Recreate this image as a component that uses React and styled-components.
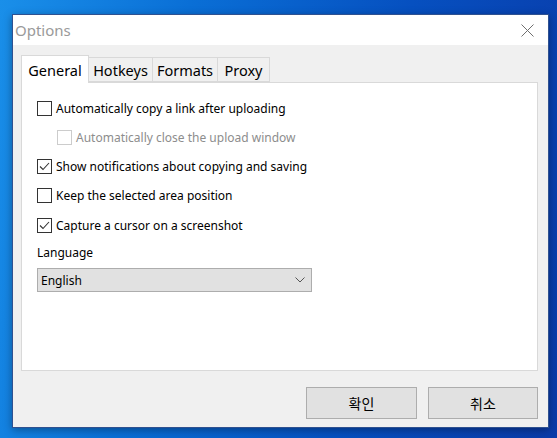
import React, { useState } from "react";
import styled, { createGlobalStyle } from "styled-components";

const GlobalStyle = createGlobalStyle`
  html, body {
    margin: 0;
    padding: 0;
    height: 438px;
    overflow: hidden;
  }
  body {
    background: linear-gradient(100deg, #1a8fe9 0%, #0a6fd6 30%, #0650c0 65%, #0a3aa8 100%);
    font-family: "Noto Sans", "Liberation Sans", sans-serif;
  }
`;

const Desktop = styled.div`
  padding: 14px 0 0 12px;
`;

const Window = styled.div`
  width: 537px;
  height: 414px;
  box-sizing: border-box;
  border: 1px solid #2f5190;
  background: #f0f0f0;
  display: flex;
  flex-direction: column;
  box-shadow: 0 2px 8px rgba(0, 0, 0, 0.35);
`;

const TitleBar = styled.div`
  height: 31px;
  background: #fff;
  display: flex;
  align-items: center;
  justify-content: space-between;
  padding: 0 14px 0 2px;
`;

const Title = styled.span`
  font-size: 15px;
  color: #9a9a9a;
`;

const CloseIcon = () => (
  <svg width="13" height="13" viewBox="0 0 13 13">
    <path d="M0.5 0.5 L12.5 12.5 M12.5 0.5 L0.5 12.5" stroke="#6f6f6f" strokeWidth="1" fill="none" />
  </svg>
);

const Body = styled.div`
  flex: 1;
  display: flex;
  flex-direction: column;
  padding: 10px 10px 8px 8px;
`;

const TabStrip = styled.div`
  display: flex;
  align-items: flex-end;
  height: 27px;
  position: relative;
  z-index: 1;
`;

const Tab = styled.div`
  box-sizing: border-box;
  height: ${(p) => (p.$active ? "28px" : "25px")};
  margin-bottom: ${(p) => (p.$active ? "-1px" : "0")};
  background: ${(p) => (p.$active ? "#fff" : "#f0f0f0")};
  border: 1px solid #d9d9d9;
  border-bottom: ${(p) => (p.$active ? "none" : "1px solid #d9d9d9")};
  margin-left: ${(p) => (p.$first ? "0" : "-1px")};
  font-size: 14.5px;
  color: #000;
  display: flex;
  align-items: center;
  justify-content: center;
  width: ${(p) => p.$w}px;
  cursor: default;
`;

const Panel = styled.div`
  height: 289px;
  box-sizing: border-box;
  background: #fff;
  border: 1px solid #d9d9d9;
  padding: 15px 15px 0 15px;
  display: flex;
  flex-direction: column;
`;

const Options = styled.div`
  display: flex;
  flex-direction: column;
  gap: 9.25px;
`;

const Row = styled.label`
  height: 20px;
  display: flex;
  align-items: center;
  gap: 4px;
  padding-left: ${(p) => (p.$indent ? "20px" : "0")};
  font-size: 12px;
  color: ${(p) => (p.$disabled ? "#8d8d8d" : "#000")};
  cursor: default;
`;

const Box = styled.span`
  width: 15px;
  height: 15px;
  box-sizing: border-box;
  border: 1px solid ${(p) => (p.$disabled ? "#cccccc" : "#333333")};
  background: #fff;
  display: flex;
  align-items: center;
  justify-content: center;
  flex-shrink: 0;
`;

const Check = () => (
  <svg width="11" height="9" viewBox="0 0 11 9">
    <path d="M1 4.5 L4 7.5 L10 1" stroke="#333" strokeWidth="1.1" fill="none" />
  </svg>
);

const Checkbox = ({ label, checked, disabled, indent, onToggle }) => (
  <Row $disabled={disabled} $indent={indent} onClick={disabled ? undefined : onToggle}>
    <Box $disabled={disabled}>{checked && <Check />}</Box>
    {label}
  </Row>
);

const FieldLabel = styled.div`
  font-size: 12px;
  color: #000;
  margin-top: 8px;
  height: 18px;
  display: flex;
  align-items: center;
`;

const Select = styled.div`
  margin-top: 7px;
  width: 275px;
  height: 24px;
  box-sizing: border-box;
  background: #e1e1e1;
  border: 1px solid #adadad;
  display: flex;
  align-items: center;
  justify-content: space-between;
  padding: 0 6px 0 3px;
  font-size: 12px;
  color: #000;
`;

const Chevron = () => (
  <svg width="10" height="6" viewBox="0 0 10 6">
    <path d="M0.5 0.5 L5 5 L9.5 0.5" stroke="#555" strokeWidth="1" fill="none" />
  </svg>
);

const Footer = styled.div`
  display: flex;
  justify-content: flex-end;
  gap: 11px;
  margin-top: 16px;
`;

const Button = styled.button`
  width: ${(p) => p.$w}px;
  height: 32px;
  background: #e1e1e1;
  border: 1px solid #adadad;
  font-family: "Noto Sans CJK KR", "Noto Sans", sans-serif;
  font-size: 14px;
  color: #000;
  padding: 0;
`;

const tabs = [
  { name: "General", w: 68 },
  { name: "Hotkeys", w: 65 },
  { name: "Formats", w: 66 },
  { name: "Proxy", w: 53 },
];

export default function App() {
  const [opts, setOpts] = useState({
    copyLink: false,
    closeUpload: false,
    notify: true,
    keepArea: false,
    cursor: true,
  });
  const toggle = (k) => () => setOpts({ ...opts, [k]: !opts[k] });

  return (
    <>
      <GlobalStyle />
      <Desktop>
        <Window>
          <TitleBar>
            <Title>Options</Title>
            <CloseIcon />
          </TitleBar>
          <Body>
            <TabStrip>
              {tabs.map((t, i) => (
                <Tab key={t.name} $active={i === 0} $first={i === 0} $w={t.w}>
                  {t.name}
                </Tab>
              ))}
            </TabStrip>
            <Panel>
              <Options>
                <Checkbox label="Automatically copy a link after uploading" checked={opts.copyLink} onToggle={toggle("copyLink")} />
                <Checkbox label="Automatically close the upload window" checked={opts.closeUpload} disabled indent />
                <Checkbox label="Show notifications about copying and saving" checked={opts.notify} onToggle={toggle("notify")} />
                <Checkbox label="Keep the selected area position" checked={opts.keepArea} onToggle={toggle("keepArea")} />
                <Checkbox label="Capture a cursor on a screenshot" checked={opts.cursor} onToggle={toggle("cursor")} />
              </Options>
              <FieldLabel>Language</FieldLabel>
              <Select>
                English
                <Chevron />
              </Select>
            </Panel>
            <Footer>
              <Button $w={111}>확인</Button>
              <Button $w={110}>취소</Button>
            </Footer>
          </Body>
        </Window>
      </Desktop>
    </>
  );
}
